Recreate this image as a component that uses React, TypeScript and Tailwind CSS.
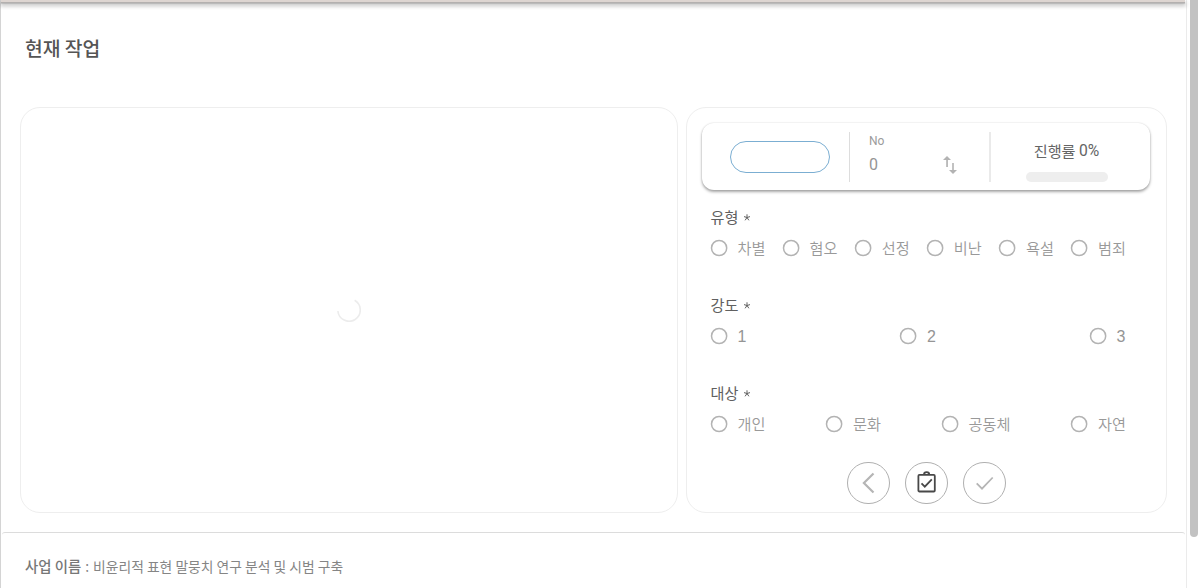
import React from "react";

function Radio({ label, latin }: { label: string; latin?: boolean }) {
  return (
    <label className="flex h-6 items-center">
      <svg className="mr-[10px] block h-[18px] w-[17px] shrink-0 overflow-visible" viewBox="0 0 17 18">
        <circle cx="8.1" cy="9" r="7.6" fill="none" stroke="#b3b3b3" strokeWidth="1.5" />
      </svg>
      <span
        className={
          latin
            ? "mt-px w-[9.5px] font-['Liberation_Sans',sans-serif] text-[16px] leading-6 text-[#959595]"
            : "-mt-[3px] whitespace-nowrap text-[15.2px] font-[350] leading-6 text-[#999]"
        }
      >
        {label}
      </span>
    </label>
  );
}

function Question({ title, options, latin }: { title: string; options: string[]; latin?: boolean }) {
  return (
    <div className="h-[88px]">
      <div className="flex h-6 items-center text-[15.2px] leading-6 text-[#606060]">
        {title}
        <svg className="mt-[3px] ml-[6px] block h-[7px] w-[6px]" viewBox="0 0 6 7" stroke="#606060" strokeWidth="1" fill="none">
          <path d="M3 .3V3.5M0 2.6l3 .9 3-.9M1.1 6.3L3 3.5l1.9 2.8" />
        </svg>
      </div>
      <div className="mt-2 flex justify-between">
        {options.map((o) => (
          <Radio key={o} label={o} latin={latin} />
        ))}
      </div>
    </div>
  );
}

function RoundButton({ children }: { children: React.ReactNode }) {
  return (
    <button className="flex h-[42px] w-[43px] items-center justify-center rounded-full border border-[#b0b0b0]">{children}</button>
  );
}

export default function App() {
  return (
    <div className="flex h-[588px] w-[1200px] overflow-hidden bg-white font-['Noto_Sans_CJK_KR',sans-serif]">
      <div className="flex w-[1187px] flex-col border-x border-l-[#d4d4d4] border-r-[#ebebeb]">
        <header className="mr-px h-[2px] shrink-0 bg-[#ddd5d1] shadow-[0_1px_0_#b3b0af,0_2px_1px_rgba(0,0,0,0.16),0_3px_4px_1px_rgba(0,0,0,0.24)]" />
        <h1 className="mt-[30px] ml-6 h-8 text-[19.3px] leading-8 font-medium text-[#555]">현재 작업</h1>

        <main className="mt-[43px] ml-[19px] flex h-[406px] gap-2">
          <section className="flex w-[658px] items-center justify-center rounded-[20px] border border-[#eee]">
            <svg className="block size-6" viewBox="0 0 24 24" fill="none" stroke="#ececec" strokeWidth="1.6">
              <path d="M17.6 2.3A11.2 11.2 0 1 1 .9 13" />
            </svg>
          </section>

          <section className="w-[481px] rounded-[20px] border border-[#eee] px-[15px] pt-[15px]">
            <div className="flex h-[67px] w-[448px] items-start rounded-xl bg-white shadow-[0_2px_3px_rgba(0,0,0,0.34),0_0_2px_rgba(0,0,0,0.14)]">
              <div className="flex h-full w-[147px] items-center pl-7">
                <div className="h-8 w-[100px] rounded-full border border-[#7baed2]" />
              </div>
              <div className="mt-[9px] flex h-[50px] w-[140px] justify-between border-l border-[#ddd]">
                <div className="ml-[19px]">
                  <div className="mt-px font-['Roboto',sans-serif] text-[12px] leading-[17px] text-[#9b9b9b]">No</div>
                  <div className="mt-[6px] font-['Roboto',sans-serif] text-[16px] leading-[18px] text-[#959595]">0</div>
                </div>
                <svg className="mt-6 mr-8 block h-[18px] w-[14px]" viewBox="0 0 14 18" fill="#b3b3b3">
                  <path d="M4 0 0 4h3.2v7h1.7V4H8ZM9.2 7v7H6l4 4 4-4h-3.2V7Z" />
                </svg>
              </div>
              <div className="mt-[9px] flex h-[50px] w-[153px] flex-col items-center border-l-2 border-[#eaeaea]">
                <div className="mt-[7px] flex h-[22px] items-center text-[15.2px] leading-[22px] text-[#656565]">
                  <span>진행률&nbsp;</span>
                  <span className="mt-[2px] font-['Roboto',sans-serif] text-[15.7px]">0%</span>
                </div>
                <div className="mt-[11px] h-[10px] w-[82px] shrink-0 rounded-full bg-[#eee]" />
              </div>
            </div>

            <div className="mt-[14px] ml-[8.5px] w-[415.5px]">
              <Question title="유형" options={["차별", "혐오", "선정", "비난", "욕설", "범죄"]} />
              <Question title="강도" options={["1", "2", "3"]} latin />
              <Question title="대상" options={["개인", "문화", "공동체", "자연"]} />
            </div>

            <div className="-mt-[6px] flex justify-center gap-[15px]">
              <RoundButton>
                <svg className="block size-6" viewBox="0 0 24 24" fill="none" stroke="#b5b5b5" strokeWidth="2.2">
                  <path d="m16.5 2.5-9.6 9.5 9.6 9.5" />
                </svg>
              </RoundButton>
              <RoundButton>
                <svg className="-mt-[2px] block h-[22px] w-5" viewBox="0 0 20 22" fill="none" stroke="#484848">
                  <rect x="1.4" y="3.9" width="16.4" height="16.6" rx="1" strokeWidth="1.8" />
                  <path d="M7 3.6a2.6 2.4 0 0 1 5.2 0" strokeWidth="1.8" />
                  <path d="m4.5 12.4 3.3 3.3 7-7.3" strokeWidth="1.8" />
                </svg>
              </RoundButton>
              <RoundButton>
                <svg className="block size-[18px]" viewBox="0 0 18 18" fill="none" stroke="#b5b5b5" strokeWidth="1.8">
                  <path d="m.7 9.3 5.3 5.3L16.7 3.5" />
                </svg>
              </RoundButton>
            </div>
          </section>
        </main>

        <footer className="mt-[19px] mr-px ml-px h-14 rounded-t-[3px] border-t border-[#dcdcdc] pt-[22px] pl-[23px] text-[13.8px] leading-[22px] text-[#858585]">
          <span className="text-[14.4px] font-medium text-[#777]">사업 이름</span>
          <span className="px-1">:</span>비윤리적 표현 말뭉치 연구 분석 및 시범 구축
        </footer>
      </div>
      <div className="ml-[3px] h-[537px] w-2 rounded-b-full bg-[#c2c2c2]" />
    </div>
  );
}
